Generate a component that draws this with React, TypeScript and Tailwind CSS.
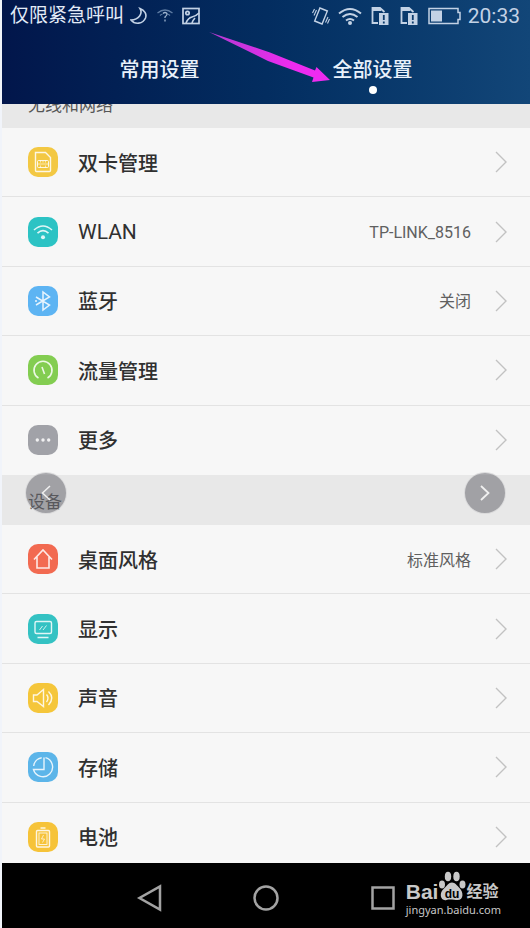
import React from 'react';

interface SettingItem {
  label: string;
  value?: string;
  tile: string;
  labelClass?: string;
  icon: React.ReactNode;
}

const connectivity: SettingItem[] = [
  {
    label: '双卡管理',
    tile: 'bg-[#f3c843]',
    icon: (
      <>
        <path d="M7.5 5.5h10l5 5v13a1 1 0 0 1-1 1h-13a1 1 0 0 1-1-1z" />
        <rect x="9.5" y="13.5" width="11" height="7" rx="1" strokeWidth="1" />
        <path d="M9.5 17h11M12.5 13.5v2M15 13.5v2M17.5 13.5v2M12.5 18.5v2M17.5 18.5v2" strokeWidth="0.7" />
      </>
    ),
  },
  {
    label: 'WLAN',
    value: 'TP-LINK_8516',
    tile: 'bg-[#2cc3c4]',
    labelClass: 'text-[21px] font-normal',
    icon: (
      <>
        <path d="M6 13q9-8 18 0M9.5 16.2q5.5-5 11 0" strokeWidth="1.6" />
        <circle cx="15" cy="20.2" r="2" fill="currentColor" stroke="none" />
      </>
    ),
  },
  {
    label: '蓝牙',
    value: '关闭',
    tile: 'bg-[#5db4f3]',
    icon: <path d="M8 11l13.5 8-6.5 5V6l6.500 5L8 19M7 15h2" strokeWidth="1.5" />,
  },
  {
    label: '流量管理',
    tile: 'bg-[#83cd51]',
    icon: <path d="M10.5 23a9 9 0 1 1 9 0M14 12l2.5 7" strokeWidth="1.6" />,
  },
  {
    label: '更多',
    tile: 'bg-[#a1a2a8]',
    icon: (
      <g fill="currentColor" stroke="none">
        <circle cx="9.3" cy="15" r="1.7" />
        <circle cx="15" cy="15" r="1.7" />
        <circle cx="20.7" cy="15" r="1.7" />
      </g>
    ),
  },
];

const device: SettingItem[] = [
  {
    label: '桌面风格',
    value: '标准风格',
    tile: 'bg-[#f26a51]',
    icon: <path d="M6 15.5L15 6l9 9.5M9 13v11h12V13" strokeWidth="1.6" />,
  },
  {
    label: '显示',
    tile: 'bg-[#34c2c3]',
    icon: (
      <>
        <rect x="7" y="7.5" width="16.5" height="12" rx="1.5" />
        <path d="M9.5 23.5h11" strokeWidth="1.6" />
        <path d="M11.5 16l3-4M15 16l3.5-4.5" strokeWidth="0.9" />
      </>
    ),
  },
  {
    label: '声音',
    tile: 'bg-[#f5c63a]',
    icon: <path d="M5.5 12v6.5H9l6.500 5V6.500L9 12zM18.500 11.500q3 3.500 0 7.500M20.500 8.500q6.500 6.500 0 13.500" />,
  },
  {
    label: '存储',
    tile: 'bg-[#5cb5e9]',
    icon: <path d="M17.5 5.7A9.7 9.7 0 1 1 5.500 17.500H16V5.500M5.700 14a9.500 9.500 0 0 1 8-8.300" />,
  },
  {
    label: '电池',
    tile: 'bg-[#f6c339]',
    icon: (
      <>
        <rect x="8.5" y="8.5" width="13" height="16.5" rx="1" />
        <rect x="11" y="11" width="8" height="11.5" strokeWidth="0.9" />
        <path d="M12.5 6h5" />
        <path d="M15.5 13l-2 4h3l-2 3.5" strokeWidth="0.8" />
      </>
    ),
  },
];

function Chevron() {
  return (
    <svg className="h-6 w-3 shrink-0 text-[#c2c2c2]" viewBox="0 0 12 24" fill="none" stroke="currentColor" strokeWidth="1.4">
      <path d="M1 2l10 10L1 22" />
    </svg>
  );
}

function SectionTitle({ children }: { children: React.ReactNode }) {
  return (
    <h2 className="flex h-[50px] items-center bg-[#e8e8e8] pt-[6px] pl-[26px] text-[17px] text-[#565656]">{children}</h2>
  );
}

function SettingList({ items }: { items: SettingItem[] }) {
  return (
    <ul className="grid h-[347px] auto-rows-fr">
      {items.map((item) => (
        <li key={item.label} className="border-b border-[#e3e3e3] last:border-transparent">
          <button type="button" className="flex h-full w-full items-center pr-[23px] pl-[26px] text-left">
            <svg
              className={`h-[30px] w-[30px] shrink-0 rounded-[10px] text-white/85 ${item.tile}`}
              viewBox="0 0 30 30"
              fill="none"
              stroke="currentColor"
              strokeWidth="1.4"
            >
              {item.icon}
            </svg>
            <span className={`ml-5 flex-1 pt-[3px] text-[#303030] ${item.labelClass ?? 'text-[20px] font-medium'}`}>
              {item.label}
            </span>
            {item.value && <span className="mr-6 pt-[3px] text-[16px] text-[#606060]">{item.value}</span>}
            <Chevron />
          </button>
        </li>
      ))}
    </ul>
  );
}

function SimAlert() {
  return (
    <svg className="h-5 w-[18px]" viewBox="0 0 18 20" fill="none" stroke="currentColor" strokeWidth="1.8">
      <path d="M7 17H1.500V2H9l4.500 4" />
      <path d="M1.5 3.500h8.500" strokeWidth="3" />
      <path d="M8 7h9.500v12H8z" fill="currentColor" stroke="none" />
      <path d="M12.800 9v5M12.800 15.500v2" stroke="#0b3a6c" />
    </svg>
  );
}

function StatusBar() {
  return (
    <div className="flex h-8 items-center pr-[10px] pl-2 text-[#c3d2e5]">
      <span className="text-[19px] text-[#e3ebf7]">仅限紧急呼叫</span>
      <svg className="ml-[6px] h-5 w-[18px]" viewBox="0 0 18 20" fill="none" stroke="currentColor" strokeWidth="1.6">
        <path d="M10 2.500c3 5-1 11-9 11.500 4 5 12 4 14.500-2C17 8 14.500 4 10 2.500z" />
      </svg>
      <svg className="ml-[9px] h-4 w-4 text-[#5f7ca3]" viewBox="0 0 16 16" fill="none" stroke="currentColor" strokeWidth="1.300">
        <path d="M.5 5Q8-1 15.500 5M3 7.500Q4 6.500 5.500 6M13 7.500q-1-1-2.500-1.500" />
        <path d="M6 5.500q2-2 4 0 .5 1.500-2 3.500v1M8 11.500v2" stroke="#9db3ce" />
      </svg>
      <svg className="ml-[9px] h-[18px] w-[18px]" viewBox="0 0 18 18" fill="none" stroke="currentColor" strokeWidth="1.7">
        <rect x="1" y="1.5" width="16" height="15" />
        <circle cx="5.5" cy="6" r="1.7" />
        <path d="M4 16q2-5 6-6 4-1 7-4M10 16q1-3 3-5" />
      </svg>
      <div className="flex flex-1 items-center justify-end">
        <svg className="h-5 w-[18px]" viewBox="0 0 18 20" fill="none" stroke="currentColor" strokeWidth="1.4">
          <rect x="5" y="3" width="8" height="14" transform="rotate(22 9 10)" />
          <path d="M4.500 4L2 9.500M2.500 3L.5 7M13.500 16.500L16 11M15.500 17.500l2-4.500" strokeWidth="1.1" />
        </svg>
        <svg className="ml-2 h-5 w-6" viewBox="0 0 24 20" fill="none" stroke="currentColor" strokeWidth="2">
          <path d="M1 7.500q11-9 22 0M4.500 11q7.500-6 15 0M8 14.500q4-3 8 0" />
          <circle cx="12" cy="17" r="2" fill="currentColor" stroke="none" />
        </svg>
        <span className="ml-[9px] flex gap-[11px]">
          <SimAlert />
          <SimAlert />
        </span>
        <svg className="ml-[10px] h-[18px] w-[33px]" viewBox="0 0 33 18" fill="none" stroke="currentColor" strokeWidth="1.5">
          <path d="M1 1.500h29v4h2v7h-2v4H1z" />
          <path d="M3 3.500h11v11H3z" fill="currentColor" stroke="none" />
        </svg>
        <span className="ml-[7px] pt-px text-[21px]">20:33</span>
      </div>
    </div>
  );
}

function Watermark() {
  return (
    <div className="absolute right-[29px] bottom-3 flex flex-col text-[#c8c8c8]">
      <div className="flex h-8 items-end font-['Liberation_Sans','Noto_Sans_CJK_SC',sans-serif]">
        <span className="text-[21px] leading-6 font-bold">Bai</span>
        <svg className="mb-[2px] h-8 w-7 shrink-0" viewBox="0 0 28 32" fill="currentColor">
          <ellipse cx="4" cy="14.500" rx="3" ry="4" />
          <ellipse cx="10" cy="6.500" rx="3.200" ry="4.800" />
          <ellipse cx="18.500" cy="6.500" rx="3.200" ry="4.800" />
          <ellipse cx="24.500" cy="14.500" rx="3" ry="4" />
          <path d="M14 12.500c3 0 5 3 7.500 5.500 4 4 4.500 12-2 12-3 0-8-1-11 0-6 1.500-8-7-2.500-11.500 3-2.500 4.500-6 8-6z" />
          <text x="14" y="28" textAnchor="middle" fontSize="12" fontWeight="700" fill="#000">
            du
          </text>
        </svg>
        <span className="text-[16px] leading-6 font-bold">经验</span>
      </div>
      <span className="font-['Noto_Sans',sans-serif] text-[11px] leading-3">jingyan.baidu.com</span>
    </div>
  );
}

export default function App() {
  return (
    <div className="relative flex h-screen flex-col overflow-hidden bg-[#f1f4fa] pl-[2px] font-[Roboto,'Noto_Sans_CJK_SC',sans-serif]">
      <header className="h-[104px] shrink-0 bg-linear-to-r from-[#02164b] via-[#032d60] to-[#124678]">
        <StatusBar />
        <nav className="grid grid-cols-2 items-start px-[51px] pt-[22px] text-[20px] leading-8 font-medium text-[#e9f1fb]">
          <button type="button">常用设置</button>
          <button type="button" className="flex flex-col items-center" aria-current="page">
            全部设置
            <span className="h-2 w-2 rounded-full bg-white" />
          </button>
        </nav>
      </header>

      {/* Content is scrolled a little, so the first title sits half under the header */}
      <main className="min-h-0 flex-1 overflow-hidden bg-[#f7f7f7]">
        <div className="-mt-[26px]">
          <SectionTitle>无线和网络</SectionTitle>
          <SettingList items={connectivity} />
          <SectionTitle>设备</SectionTitle>
          <SettingList items={device} />
        </div>
      </main>

      <footer className="relative h-[65px] shrink-0 bg-black">
        <div className="grid h-full grid-cols-3 items-center px-[88px] pt-1 text-[#a3a3a3]">
          <button type="button" aria-label="返回" className="flex justify-center">
            <svg className="h-7 w-7" viewBox="0 0 28 28" fill="none" stroke="currentColor" strokeWidth="2.5">
              <path d="M25 2.500v23L4.500 14z" />
            </svg>
          </button>
          <button type="button" aria-label="主屏幕" className="flex justify-center">
            <svg className="h-7 w-7" viewBox="0 0 28 28" fill="none" stroke="currentColor" strokeWidth="2.5">
              <circle cx="14" cy="14" r="11.500" />
            </svg>
          </button>
          <button type="button" aria-label="最近任务" className="flex justify-center">
            <svg className="h-7 w-7" viewBox="0 0 28 28" fill="none" stroke="currentColor" strokeWidth="2.5">
              <rect x="3.5" y="3.5" width="21" height="21" />
            </svg>
          </button>
        </div>
        <Watermark />
      </footer>

      {/* Pointer to the second tab */}
      <svg className="absolute top-[30px] left-[208px] h-[54px] w-[124px]" viewBox="208 30 124 54">
        <defs>
          <linearGradient id="pointer">
            <stop offset="0" stopColor="#b23ad2" />
            <stop offset="0.7" stopColor="#ee2bf0" />
          </linearGradient>
        </defs>
        <path d="M209 32L270 52.500 315 70.500 316.500 67 330 80 312 82 313.500 77.500 268 61z" fill="url(#pointer)" />
      </svg>

      {/* Gallery paging */}
      <button
        type="button"
        aria-label="上一张"
        className="absolute top-[472px] left-[25px] flex h-[42px] w-[42px] items-center justify-center rounded-full border border-white/60 bg-[#5a5a62]/50"
      >
        <svg className="h-4 w-[10px] text-[#f0f0f0]" viewBox="0 0 10 16" fill="none" stroke="currentColor" strokeWidth="1.5">
          <path d="M9 1L1.500 8 9 15" />
        </svg>
      </button>
      <button
        type="button"
        aria-label="下一张"
        className="absolute top-[472px] right-6 flex h-[42px] w-[42px] items-center justify-center rounded-full border border-white/60 bg-[#5a5a62]/50"
      >
        <svg className="h-4 w-[10px] text-[#f0f0f0]" viewBox="0 0 10 16" fill="none" stroke="currentColor" strokeWidth="1.8">
          <path d="M1 1l7.500 7L1 15" />
        </svg>
      </button>
    </div>
  );
}
